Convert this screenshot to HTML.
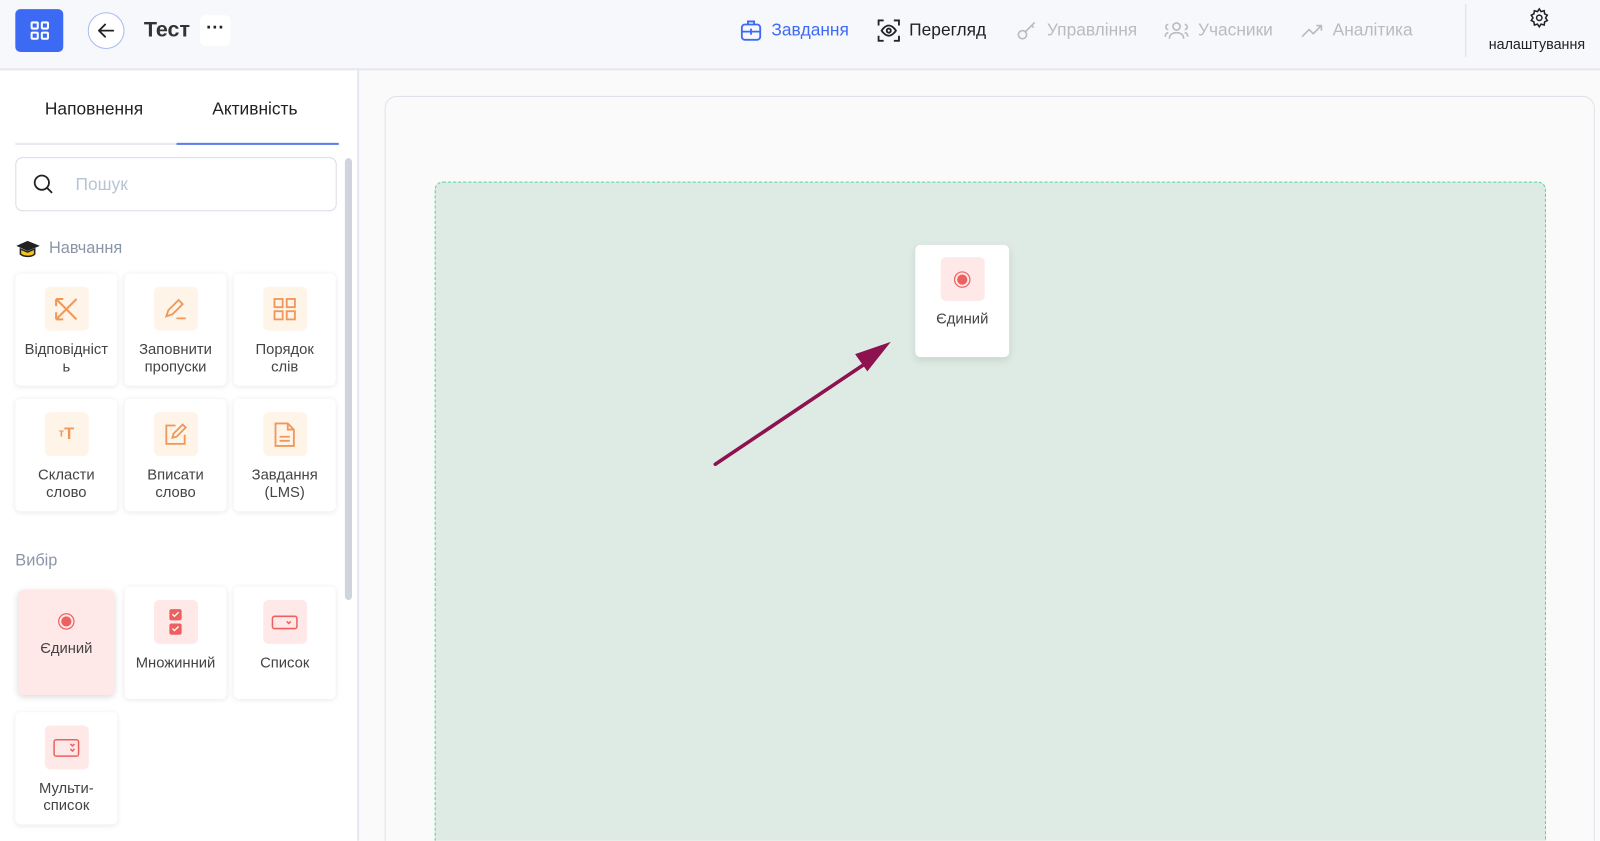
<!DOCTYPE html>
<html><head><meta charset="utf-8"><style>
*{box-sizing:border-box;margin:0;padding:0}
html,body{width:1600px;height:841px;overflow:hidden}
body{font-family:"Liberation Sans","DejaVu Sans",sans-serif;background:#fafafa;position:relative;color:#222}
#w{position:absolute;left:0;top:0;width:1568px;height:824px;overflow:hidden;transform:scale(1.0204);transform-origin:0 0}
.hdr{position:absolute;left:0;top:0;width:1568px;height:69px;background:#f7f8fc;border-bottom:2px solid #e6e6ef}
.abs{position:absolute}
.side{position:absolute;left:0;top:69px;width:352px;height:760px;background:#fff;border-right:2px solid #e6e6ef}
.card{position:absolute;width:100px;height:110px;background:#fff;border-radius:5px;box-shadow:0 1px 5px rgba(0,0,0,.09);text-align:center;font-size:14.5px;color:#444;line-height:17px}
.ib{width:43px;height:43px;border-radius:5px;margin:13px auto 11px;display:flex;align-items:center;justify-content:center}
.or{background:#fff4e8}.pk{background:#ffe8e8}
.nav{position:absolute;top:19px;font-size:17px;display:flex;align-items:center;gap:9px}
</style></head><body><div id="w">
<div class="hdr">
 <div class="abs" style="left:15px;top:9px;width:47px;height:42px;background:#3d6af5;border-radius:5px;display:flex;align-items:center;justify-content:center">
  <svg width="20" height="20" viewBox="0 0 20 20" fill="none" stroke="#fff" stroke-width="2"><rect x="2" y="2" width="6" height="6" rx="1"/><rect x="12" y="2" width="6" height="6" rx="1"/><rect x="2" y="12" width="6" height="6" rx="1"/><rect x="12" y="12" width="6" height="6" rx="1"/></svg></div>
 <div class="abs" style="left:86px;top:12px;width:36px;height:36px;border-radius:50%;border:1.5px solid #a9baf5;background:#fff;display:flex;align-items:center;justify-content:center">
  <svg width="16" height="14" viewBox="0 0 16 14" fill="none" stroke="#222" stroke-width="1.8" stroke-linecap="round"><path d="M15 7H2M7 1L1 7l6 6"/></svg></div>
 <div class="abs" style="left:141px;top:18px;font-size:21px;font-weight:bold;color:#333">Тест</div>
 <div class="abs" style="left:196px;top:15px;width:30px;height:30px;background:#fff;border-radius:5px;text-align:center;font-size:18px;line-height:24px;font-weight:bold">···</div>
 <div class="nav" style="left:725px;color:#3d6af5"><svg width="22" height="22" viewBox="0 0 22 22" fill="none" stroke="#3d6af5" stroke-width="1.8"><rect x="2" y="5" width="18" height="15" rx="3"/><path d="M8 5V2h6v3M2 12h18M11 9v6"/></svg>Завдання</div>
 <div class="nav" style="left:860px;color:#222"><svg width="22" height="22" viewBox="0 0 22 22" fill="none" stroke="#222" stroke-width="1.8"><path d="M1 6V1h5M16 1h5v5M21 16v5h-5M6 21H1v-5"/><path d="M4 11s3-5 7-5 7 5 7 5-3 5-7 5-7-5-7-5z"/><circle cx="11" cy="11" r="2"/></svg>Перегляд</div>
 <div class="nav" style="left:995px;color:#bbb"><svg width="22" height="22" viewBox="0 0 22 22" fill="none" stroke="#bbb" stroke-width="1.6"><circle cx="7" cy="15" r="4"/><path d="M10 12l9-9M16 6l2 2"/></svg>Управління</div>
 <div class="nav" style="left:1141px;color:#bbb"><svg width="24" height="22" viewBox="0 0 24 22" fill="none" stroke="#bbb" stroke-width="1.6"><circle cx="12" cy="7" r="3.5"/><path d="M5 19c0-4 3-6 7-6s7 2 7 6M4 10a2.5 2.5 0 010-5M20 10a2.5 2.5 0 000-5M1 17c0-2 1-4 3-4M23 17c0-2-1-4-3-4"/></svg>Учасники</div>
 <div class="nav" style="left:1275px;color:#bbb"><svg width="22" height="22" viewBox="0 0 22 22" fill="none" stroke="#bbb" stroke-width="1.6"><path d="M1 17l7-7 4 4 8-8M15 6h5v5"/></svg>Аналітика</div>
 <div class="abs" style="left:1436px;top:4px;width:1px;height:52px;background:#dcdce4"></div>
 <svg class="abs" style="left:1498px;top:7px" width="21" height="21" viewBox="0 0 24 24" fill="none" stroke="#222" stroke-width="1.7"><circle cx="12" cy="12" r="3"/><path d="M12 2l2 3 3.5-1 .5 3.5L21 9l-2 3 2 3-3 1.5-.5 3.5-3.5-1-2 3-2-3-3.5 1L6 16.5 3 15l2-3-2-3 3-1.5L6.5 4 10 5z"/></svg>
 <div class="abs" style="left:1459px;top:35px;font-size:14px;color:#222">налаштування</div>
</div>
<div class="side">
 <div class="abs" style="left:44px;top:28px;font-size:17px">Наповнення</div>
 <div class="abs" style="left:208px;top:28px;font-size:17px">Активність</div>
 <div class="abs" style="left:15px;top:71px;width:317px;height:2px;background:#e8e8ee"></div>
 <div class="abs" style="left:173px;top:71px;width:159px;height:2px;background:#5a7ef5"></div>
 <div class="abs" style="left:15px;top:85px;width:315px;height:53px;border:1.5px solid #dcdce6;border-radius:7px"></div>
 <svg class="abs" style="left:32px;top:101px" width="20" height="20" viewBox="0 0 20 20" fill="none" stroke="#222" stroke-width="1.8"><circle cx="9" cy="9" r="7"/><path d="M14 14l5 5"/></svg>
 <div class="abs" style="left:74px;top:102px;font-size:17px;color:#b8c3d3">Пошук</div>
 <svg class="abs" style="left:15px;top:165px" width="25" height="20" viewBox="0 0 25 20"><path d="M1 7l11-5 12 5-12 5z" fill="#222"/><path d="M5 10v5c4 3 11 3 14 0v-5l-7 3z" fill="#f5c518" stroke="#222" stroke-width="1.5"/></svg>
 <div class="abs" style="left:48px;top:166px;font-size:16px;color:#8a96a8">Навчання</div>
 <div class="abs" style="left:15px;top:472px;font-size:16px;color:#8a96a8">Вибір</div>
 <div class="abs" style="left:338px;top:86px;width:7px;height:433px;background:#d0d5dd;border-radius:4px"></div>
</div>
<div class="card" style="left:15px;top:268px"><div class="ib or"><svg width="26" height="26" viewBox="0 0 26 26" fill="none" stroke="#f0975a" stroke-width="2"><path d="M3 3l20 20M3 3v7M3 3h7M23 3L3 23M3 23v-7M3 23h7"/></svg></div>Відповідніст<br>ь</div>
<div class="card" style="left:122px;top:268px"><div class="ib or"><svg width="26" height="26" viewBox="0 0 26 26" fill="none" stroke="#f0975a" stroke-width="1.8"><path d="M4 20l2-6L16 4l4 4-10 10zM14 22h9"/></svg></div>Заповнити<br>пропуски</div>
<div class="card" style="left:229px;top:268px"><div class="ib or"><svg width="24" height="24" viewBox="0 0 24 24" fill="none" stroke="#f0975a" stroke-width="1.8"><rect x="2" y="2" width="8" height="8"/><rect x="14" y="2" width="8" height="8"/><rect x="2" y="14" width="8" height="8"/><rect x="14" y="14" width="8" height="8"/></svg></div>Порядок<br>слів</div>
<div class="card" style="left:15px;top:391px"><div class="ib or" style="color:#f0975a;font-size:16px;font-weight:bold"><span style="font-size:11px">т</span>T</div>Скласти<br>слово</div>
<div class="card" style="left:122px;top:391px"><div class="ib or"><svg width="24" height="24" viewBox="0 0 24 24" fill="none" stroke="#f0975a" stroke-width="1.8"><path d="M12 3H3v18h18v-9M9 15l1-4 9-9 3 3-9 9z"/></svg></div>Вписати<br>слово</div>
<div class="card" style="left:229px;top:391px"><div class="ib or"><svg width="22" height="26" viewBox="0 0 22 26" fill="none" stroke="#f0975a" stroke-width="1.8"><path d="M2 2h12l6 6v16H2zM14 2v6h6M6 15h10M6 19h10"/></svg></div>Завдання<br>(LMS)</div>
<div class="card" style="left:18px;top:578px;width:94px;height:103px;background:#ffe8e8;box-shadow:0 2px 6px rgba(0,0,0,.15)"><div style="height:50px;display:flex;align-items:center;justify-content:center;padding-top:12px"><svg width="18" height="18"><circle cx="9" cy="9" r="7.5" fill="none" stroke="#ee6060" stroke-width="1.2"/><circle cx="9" cy="9" r="5" fill="#ee6060"/></svg></div>Єдиний</div>
<div class="card" style="left:122px;top:575px"><div class="ib pk"><svg width="14" height="28" viewBox="0 0 14 28"><rect x="1" y="1" width="12" height="11" rx="2" fill="#ee6060"/><rect x="1" y="15" width="12" height="11" rx="2" fill="#ee6060"/><path d="M4 6l2 2 4-4M4 20l2 2 4-4" stroke="#fff" stroke-width="1.3" fill="none"/></svg></div>Множинний</div>
<div class="card" style="left:229px;top:575px"><div class="ib pk"><svg width="26" height="14" viewBox="0 0 26 14" fill="none" stroke="#ee6060" stroke-width="1.5"><rect x="1" y="1" width="24" height="12" rx="2"/><path d="M15 6l2 2 2-2"/></svg></div>Список</div>
<div class="card" style="left:15px;top:698px"><div class="ib pk"><svg width="26" height="18" viewBox="0 0 26 18" fill="none" stroke="#ee6060" stroke-width="1.5"><rect x="1" y="1" width="24" height="16" rx="2"/><path d="M17 5l2 2 2-2M17 10l2 2 2-2"/></svg></div>Мульти-<br>список</div>
<div class="abs" style="left:377px;top:94px;width:1186px;height:760px;border:1.5px solid #e1e1ea;border-radius:12px;background:#fafafa"></div>
<div class="abs" style="left:426px;top:178px;width:1089px;height:680px;border:1.5px dashed #44d49a;border-radius:8px;background:#deebe4"></div>
<div class="card" style="left:897px;top:240px;width:92px;height:110px;box-shadow:0 3px 8px rgba(0,0,0,.1)"><div class="ib pk" style="margin-top:12px;margin-bottom:10px"><svg width="18" height="18"><circle cx="9" cy="9" r="7.5" fill="none" stroke="#ee6060" stroke-width="1.2"/><circle cx="9" cy="9" r="5" fill="#ee6060"/></svg></div>Єдиний</div>
<svg class="abs" style="left:690px;top:325px" width="200" height="140"><path d="M11 130L160 30" stroke="#8e1250" stroke-width="3.5" stroke-linecap="round"/><path d="M183 10L148 22l12 17z" fill="#8e1250"/></svg>
</div></body></html>
